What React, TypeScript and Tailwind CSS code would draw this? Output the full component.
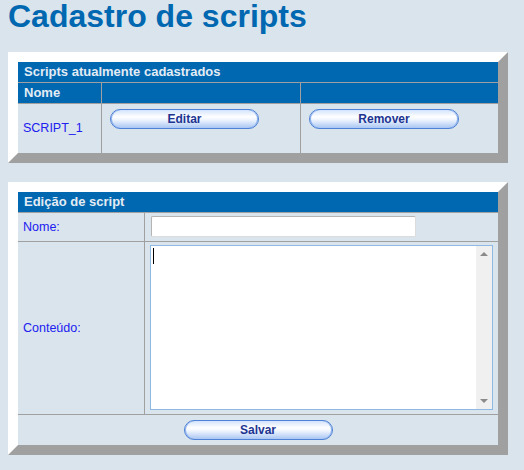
const font = "font-['Liberation_Sans',Arial,sans-serif]";

const PillButton = ({ label, width }: { label: string; width: string }) => (
  <button
    className={`block ${width} h-[20px] rounded-full border border-[#4f82d6] bg-[linear-gradient(to_bottom,#d3e3fb_0%,#ffffff_38%,#eef4fe_55%,#a9c6f3_100%)] text-[12px] leading-[18px] font-bold text-[#1d3491] shadow-[inset_1px_0_0_#8fb3ee,inset_-1px_0_0_#8fb3ee]`}
  >
    {label}
  </button>
);

const Panel = ({ children }: { children: React.ReactNode }) => (
  <div className="w-[500px] border-[10px] border-t-white border-l-white border-r-[#a0a0a0] border-b-[#a0a0a0]">
    {children}
  </div>
);

const HeaderRow = ({ title }: { title: string }) => (
  <div className="h-[21px] border-b border-[#a0a0a0] bg-[#0067b1] pl-[6px] text-[13px] leading-[20px] font-bold text-[#e4ecf4]">
    {title}
  </div>
);

export default function App() {
  return (
    <div className={`min-h-[470px] w-[524px] bg-[#d9e4ec] pl-[8px] pt-px ${font}`}>
      <h1 className="m-0 -mt-[3px] text-[32px] leading-[36px] font-bold text-[#0067b1]">
        Cadastro de scripts
      </h1>

      {/* Scripts cadastrados */}
      <div className="mt-[18px]">
        <Panel>
          <HeaderRow title="Scripts atualmente cadastrados" />
          <div className="flex h-[21px] border-b border-[#a0a0a0] bg-[#0067b1] text-[13px] leading-[20px] font-bold text-[#e4ecf4]">
            <div className="w-[84px] border-r border-[#a0a0a0] pl-[6px]">Nome</div>
            <div className="w-[199px] border-r border-[#a0a0a0]" />
            <div className="flex-1" />
          </div>
          <div className="flex h-[49px]">
            <div className="flex w-[84px] items-center border-r border-[#a0a0a0] pl-[5px] text-[12.5px] text-[#2020f0]">
              SCRIPT_1
            </div>
            <div className="w-[199px] border-r border-[#a0a0a0] pl-[8px] pt-[5px]">
              <PillButton label="Editar" width="w-[149px]" />
            </div>
            <div className="flex-1 pl-[8px] pt-[5px]">
              <PillButton label="Remover" width="w-[150px]" />
            </div>
          </div>
        </Panel>
      </div>

      {/* Edição de script */}
      <div className="mt-[19px] pb-[15px]">
        <Panel>
          <HeaderRow title="Edição de script" />
          <div className="flex h-[29px] border-b border-[#a0a0a0]">
            <div className="flex w-[127px] items-center border-r border-[#a0a0a0] pl-[5px] text-[12.5px] text-[#2020f0]">
              Nome:
            </div>
            <div className="pl-[6px] pt-[3px]">
              <div className="h-[21px] w-[265px] rounded-[2px] border border-[#b4b4b4] border-b-[#dcdcdc] border-r-[#dcdcdc] bg-white" />
            </div>
          </div>
          <div className="flex h-[173px] border-b border-[#a0a0a0]">
            <div className="flex w-[127px] items-center border-r border-[#a0a0a0] pl-[5px] text-[12.5px] text-[#2020f0]">
              Conteúdo:
            </div>
            <div className="pl-[5px] pt-[3px]">
              <div className="flex h-[165px] w-[343px] border border-[#8db9e2] bg-white">
                <div className="flex-1 pl-[2px] pt-[2px]">
                  <div className="h-[16px] w-px bg-black" />
                </div>
                <div className="flex w-[16px] flex-col items-center justify-between bg-[#f0f0f0] py-[6px]">
                  <div className="h-0 w-0 border-x-[4px] border-b-[4px] border-x-transparent border-b-[#8a8a8a]" />
                  <div className="h-0 w-0 border-x-[4px] border-t-[4px] border-x-transparent border-t-[#8a8a8a]" />
                </div>
              </div>
            </div>
          </div>
          <div className="flex h-[30px] justify-center pt-[5px]">
            <PillButton label="Salvar" width="w-[149px]" />
          </div>
        </Panel>
      </div>
    </div>
  );
}
